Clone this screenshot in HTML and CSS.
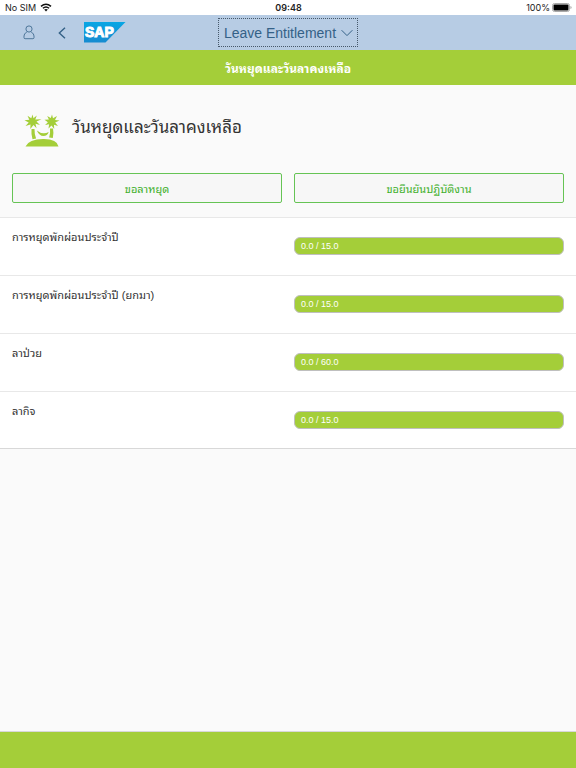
FILE: index.html
```
<!DOCTYPE html>
<html lang="th">
<head>
<meta charset="utf-8">
<meta name="viewport" content="width=device-width, initial-scale=1">
<title>Leave Entitlement</title>
<link rel="stylesheet" href="styles.css">
</head>
<body>
<div class="status">
  <div class="status-side">
    <span>No SIM</span>
    <svg class="wifi" viewBox="0 0 12 9" aria-hidden="true">
      <path d="M1 3.4Q6-.9 11 3.4M2.9 5.3Q6 2.7 9.1 5.3" fill="none" stroke="#111" stroke-width="1.5"/>
      <path d="M4.2 6.6Q6 5.3 7.8 6.6L6 8.6Z" fill="#111"/>
    </svg>
  </div>
  <span class="clock">09:48</span>
  <div class="status-side status-end">
    <span>100%</span>
    <svg class="battery" viewBox="0 0 20 9" aria-hidden="true">
      <rect x=".5" y=".5" width="17" height="8" rx="2" fill="#fff" stroke="#aaa"/>
      <rect x="1.5" y="1.5" width="15" height="6" rx="1" fill="#000"/>
      <path d="M18.5 3v3q1-.4 1-1.5t-1-1.5z" fill="#999"/>
    </svg>
  </div>
</div>

<header class="shell">
  <div class="shell-start">
    <button class="icon-button" type="button" aria-label="User">
      <svg class="user" viewBox="0 0 12 15" aria-hidden="true"><circle cx="6" cy="4" r="3.1"/><path d="M3.700 7.300Q1 8.300 1 11v1.600q0 1.100 1.100 1.100h7.800q1.100 0 1.100-1.100V11q0-2.700-2.700-3.700"/></svg>
    </button>
    <button class="icon-button" type="button" aria-label="Back">
      <svg class="back" viewBox="0 0 8 12" aria-hidden="true"><path d="M7 .7 1.300 6 7 11.300"/></svg>
    </button>
    <a class="logo-link" href="#" aria-label="SAP">
      <svg class="logo" viewBox="0 0 42 21" aria-hidden="true">
        <defs><linearGradient id="sap" x2="0" y2="1"><stop stop-color="#08a6e4"/><stop offset="1" stop-color="#168bd0"/></linearGradient></defs>
        <path d="M0 0h41.500L21.500 20.500H0z" fill="url(#sap)"/>
        <text x="1" y="15" class="logo-text">SAP</text>
      </svg>
    </a>
  </div>
  <button class="app-title" type="button">
    <span>Leave Entitlement</span>
    <svg class="chevron" viewBox="0 0 12 8" aria-hidden="true"><path d="M.6 1.200 6 6.600l5.400-5.400"/></svg>
  </button>
</header>

<div class="page-bar"><h1>วันหยุดและวันลาคงเหลือ</h1></div>

<main>
  <section class="intro">
    <div class="heading">
      <svg class="island" viewBox="0 0 36 34" aria-hidden="true">
        <path d="M8.500.500l1 3.700 3.300-2.700-1.500 4 6.200-.300-5 2.400 3.500 3.300-4.500-1.200 1 4.500-3-3.300-3.200 4 .200-4.500L1.500 12l3.200-3.600L.5 6.300l4.800-.500-1.800-4L7.300 4.300z"/>
        <path d="M28 .5l1 3.700 4-2.200-2 4 4.500.500-4.300 2 2.800 3.500-4-1.200.2 4.200-2.700-3.500-3 3 .6-4.200-4 .700 2.800-2.800-3.400-2.400 4.400-.200-1.700-3.700 3.600 2z"/>
        <path d="M7.500 15h3q-.2 4.500 1.600 9.500l-3.600.700Q7 20 7.500 15z"/>
        <path d="M26 14.500h3q1 4.800-.2 9.500l-3.700-.600q1.500-4.500.900-8.900z"/>
        <path d="M12.800 16.500q5.700 4.600 11.900 1.600-1.200 4-5.300 4-4.200-.2-6.600-5.600z"/>
        <path d="M1.500 32.500Q5 25 19 25q14-.3 15.500 7.500z"/>
      </svg>
      <h2>วันหยุดและวันลาคงเหลือ</h2>
    </div>
    <div class="actions">
      <button class="action" type="button">ขอลาหยุด</button>
      <button class="action" type="button">ขอยืนยันปฏิบัติงาน</button>
    </div>
  </section>
  <ul class="entitlements">
    <li><span class="name">การหยุดพักผ่อนประจำปี</span><span class="meter">0.0 / 15.0</span></li>
    <li><span class="name">การหยุดพักผ่อนประจำปี (ยกมา)</span><span class="meter">0.0 / 15.0</span></li>
    <li><span class="name">ลาป่วย</span><span class="meter">0.0 / 60.0</span></li>
    <li><span class="name">ลากิจ</span><span class="meter">0.0 / 15.0</span></li>
  </ul>
</main>
<footer></footer>
</body>
</html>
```
FILE: styles.css
```
* { box-sizing: border-box; }
body {
  margin: 0;
  min-height: 100vh;
  display: flex;
  flex-direction: column;
  background: #fafafa;
  color: #333;
  font-family: "Liberation Sans", "Noto Sans Thai Looped", "Noto Looped Thai", "Loma", "Noto Sans Thai", sans-serif;
  font-size: 11px;
}
button { margin: 0; padding: 0; font: inherit; }
h1, h2 { margin: 0; }
svg { display: block; }

.status {
  height: 15px;
  padding: 0 4px 0 5px;
  display: flex;
  align-items: center;
  background: #fff;
  color: #222;
  font-family: Inter, "Liberation Sans", sans-serif;
  font-size: 9px;
}
.status-side { flex: 1; display: flex; align-items: center; gap: 4px; }
.status-end { justify-content: flex-end; gap: 2px; }
.clock { font-weight: 600; }
.wifi { width: 12px; height: 9px; }
.battery { width: 20px; height: 9px; }

.shell {
  height: 35px;
  display: grid;
  grid-template-columns: 1fr auto 1fr;
  align-items: center;
  background: #b7cce4;
}
.shell-start { display: flex; align-items: center; padding-left: 12px; }
.icon-button {
  width: 33px;
  height: 33px;
  display: flex;
  align-items: center;
  justify-content: center;
  background: none;
  border: 0;
}
.icon-button path, .icon-button circle, .chevron path { fill: none; stroke: #346187; }
.user { width: 12px; height: 15px; }
.user path, .user circle { stroke-width: 0.8; }
.back { width: 8px; height: 12px; }
.back path { stroke-width: 1.4; }
.logo-link { margin-left: 6px; }
.logo { width: 42px; height: 21px; }
.logo-text {
  font: bold 14px "Liberation Sans", sans-serif;
  fill: #fff;
  stroke: #fff;
  stroke-width: 1px;
}
.app-title {
  height: 29px;
  padding: 0 4px 0 5px;
  display: flex;
  align-items: center;
  gap: 5px;
  background: none;
  border: 1px dotted #46586a;
  color: #346187;
  font-size: 14px;
}
.chevron { width: 12px; height: 8px; }

.page-bar {
  height: 35px;
  display: flex;
  align-items: center;
  justify-content: center;
  background: #a4ce39;
  color: #fff;
}
.page-bar h1 { font-size: 12px; }

main { flex: 1; }
.intro { padding: 24px 12px 14px; border-bottom: 1px solid #e8e8e8; }
.heading { display: flex; gap: 12px; height: 64px; padding: 5px 0 0 12px; }
.island { width: 36px; height: 34px; fill: #a4ce39; }
.heading h2 { font-size: 17px; font-weight: 400; line-height: 28px; }
.actions { display: grid; grid-template-columns: 1fr 1fr; gap: 12px; }
.action {
  height: 30px;
  background: #f7f7f7;
  border: 1px solid #66c455;
  border-radius: 2px;
  color: #3fb02c;
  font-size: 11px;
}

.entitlements {
  margin: 0;
  padding: 0;
  list-style: none;
  background: #fff;
  border-bottom: 1px solid #d8d8d8;
}
.entitlements li {
  height: 58px;
  padding: 10px 12px;
  display: grid;
  grid-template-columns: 1fr 1fr;
  gap: 12px;
  border-bottom: 1px solid #e8e8e8;
}
.entitlements li:last-child { height: 56px; border-bottom: 0; }
.name { line-height: 18px; }
.meter {
  height: 18px;
  margin-top: 9px;
  padding-left: 6px;
  background: #a4ce39;
  border: 1px solid #bfbfbf;
  border-radius: 6px;
  color: #fff;
  font-size: 9px;
  line-height: 16px;
}

footer { height: 37px; background: #a4ce39; border-top: 1px solid #d8d8d8; }
```
